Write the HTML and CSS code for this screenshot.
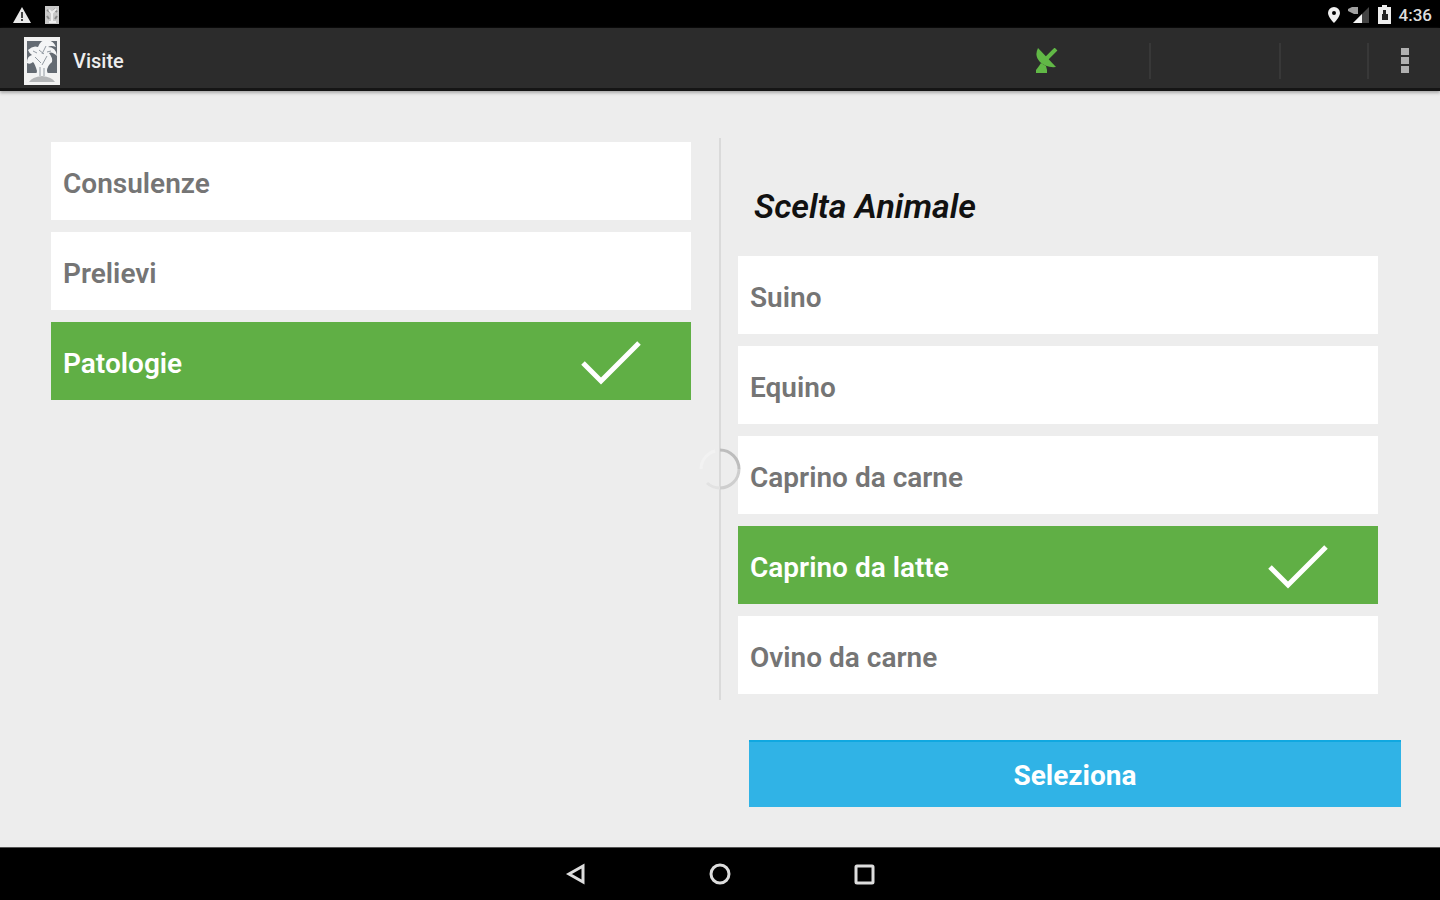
FILE: index.html
```html
<!DOCTYPE html>
<html lang="it">

<head>
    <title>Visite</title>
    <meta charset="utf-8">
    <meta name="viewport" content="width=device-width, initial-scale=1.0">
    <link rel="stylesheet" href="styles.css">
</head>

<body>
    <div class="status-bar">
        <svg width="20" height="18" viewBox="0 0 20 18">
            <path d="M10 1L19 17H1Z" fill="#e8e8e8" />
            <path d="M10 6v6M10 13v2" stroke="#444" stroke-width="2" />
        </svg>
        <svg class="notify" width="14" height="18" viewBox="0 0 14 18">
            <rect width="14" height="18" fill="#c8c8c8" />
            <path d="M2 4l3 2M9 3l3 3M2 10l2 3M12 10l-2 3" stroke="#8a8a8a" stroke-width="2" />
            <path d="M4 4l3 3 4-4M7 7v8M4 16h7" stroke="#eee" stroke-width="2" fill="none" />
        </svg>
        <div class="status-right">
            <svg width="12" height="18" viewBox="0 0 12 18">
                <path fill-rule="evenodd" d="M6 1a6 6 0 0 0-6 6c0 4 6 10 6 10s6-6 6-10a6 6 0 0 0-6-6zM6 5a2 2 0 1 1 0 4a2 2 0 0 1 0-4z" fill="#f0f0f0" />
            </svg>
            <svg width="22" height="18" viewBox="0 0 22 18">
                <path d="M21 1V17H5Z" fill="#444" />
                <path d="M14 8V17H5Z" fill="#f4f4f4" />
                <path d="M0 3l4-2h6v7H6L0 5z" fill="#a0a0a0" />
            </svg>
            <svg width="13" height="20" viewBox="0 0 13 20">
                <path d="M4 0h5v2h4v17H0V2h4z" fill="#eee" />
                <path d="M5 5h3v4h2v6H4V9h1z" fill="#222" />
            </svg>
            <span class="clock">4:36</span>
        </div>
    </div>

    <header class="action-bar">
        <svg class="logo" width="36" height="48" viewBox="0 0 36 48">
            <rect width="36" height="48" fill="#f2f2f2" />
            <rect x="3" y="4" width="30" height="32" fill="#646b73" />
            <path d="M4 13q5-5 10-3q3-8 9-7q7 1 9 7q-5-2-8 0q8 0 9 9q-5-5-8-3q4 5 3 9q-5 4-5 9l3 9H11l2-9q-2-7-4-9q-3 3-6 1q0-7 5-8q-3-2-4-5z" fill="#f4f5f6" />
            <path d="M15 13l5 4M22 9l-4 8M11 20l6 6M23 19l-5 9M27 14l-4 1M9 14l4 2M16 30v9M20 31v8" stroke="#929aa2" stroke-width="1" fill="none" />
            <path d="M5 45q3-5 13-6q10 1 13 6z" fill="#b4b6b8" />
        </svg>
        <h1>Visite</h1>
        <div class="actions">
            <svg class="antenna" width="24" height="26" viewBox="0 0 24 26">
                <path d="M3 0Q-1 8 5 14Q11 20 21 19Z" fill="#61b846" />
                <path d="M10 12L21 1" stroke="#61b846" stroke-width="4" />
                <path d="M1 25v-3l3-4 2-3 5 3 1 4v3z" fill="#61b846" />
            </svg>
            <span class="action action-first"></span>
            <span class="action action-second"></span>
            <span class="action action-third"></span>
            <button class="menu" type="button" aria-label="Menu">
                <svg width="8" height="28" viewBox="0 0 8 28">
                    <path d="M0 1h8v7H0zM0 10h8v7H0zM0 19h8v7H0z" fill="#b0b0b0" />
                </svg>
            </button>
        </div>
    </header>

    <main>
        <div class="options">
            <label class="option">
                <input type="radio" name="visita">
                <span>Consulenze</span>
                <svg class="check" width="60" height="44" viewBox="0 0 60 44"><path d="M2 22L20 40L58 2" /></svg>
            </label>
            <label class="option">
                <input type="radio" name="visita">
                <span>Prelievi</span>
                <svg class="check" width="60" height="44" viewBox="0 0 60 44"><path d="M2 22L20 40L58 2" /></svg>
            </label>
            <label class="option">
                <input type="radio" name="visita" checked>
                <span>Patologie</span>
                <svg class="check" width="60" height="44" viewBox="0 0 60 44"><path d="M2 22L20 40L58 2" /></svg>
            </label>
        </div>

        <div class="divider">
            <svg class="spinner" width="42" height="42" viewBox="0 0 42 42">
                <path d="M21 2A19 19 0 0 1 40 21" stroke="#bdbdbd" />
                <path d="M40 21A19 19 0 0 1 21 40" stroke="#cecece" />
                <path d="M21 40A19 19 0 0 1 8 35" stroke="#e2e2e2" />
                <path d="M2 21A19 19 0 0 1 16 3" stroke="#f2f2f2" />
            </svg>
        </div>

        <div class="animals">
            <h2>Scelta Animale</h2>
            <div class="options">
                <label class="option">
                    <input type="radio" name="animale">
                    <span>Suino</span>
                    <svg class="check" width="60" height="44" viewBox="0 0 60 44"><path d="M2 22L20 40L58 2" /></svg>
                </label>
                <label class="option">
                    <input type="radio" name="animale">
                    <span>Equino</span>
                    <svg class="check" width="60" height="44" viewBox="0 0 60 44"><path d="M2 22L20 40L58 2" /></svg>
                </label>
                <label class="option">
                    <input type="radio" name="animale">
                    <span>Caprino da carne</span>
                    <svg class="check" width="60" height="44" viewBox="0 0 60 44"><path d="M2 22L20 40L58 2" /></svg>
                </label>
                <label class="option">
                    <input type="radio" name="animale" checked>
                    <span>Caprino da latte</span>
                    <svg class="check" width="60" height="44" viewBox="0 0 60 44"><path d="M2 22L20 40L58 2" /></svg>
                </label>
                <label class="option">
                    <input type="radio" name="animale">
                    <span>Ovino da carne</span>
                    <svg class="check" width="60" height="44" viewBox="0 0 60 44"><path d="M2 22L20 40L58 2" /></svg>
                </label>
            </div>
        </div>

        <button class="select" type="button">Seleziona</button>
    </main>

    <nav class="nav-bar">
        <button type="button" aria-label="Indietro">
            <svg width="24" height="24" viewBox="0 0 24 24"><path d="M19 4V20L5 12Z" /></svg>
        </button>
        <button type="button" aria-label="Home">
            <svg width="24" height="24" viewBox="0 0 24 24"><circle cx="12" cy="12" r="9" /></svg>
        </button>
        <button type="button" aria-label="Recenti">
            <svg width="24" height="24" viewBox="0 0 24 24"><rect x="4" y="4" width="17" height="17" rx="1" /></svg>
        </button>
    </nav>
</body>

</html>
```
FILE: styles.css
```css
* {
    box-sizing: border-box;
}

body {
    margin: 0;
    min-height: 100vh;
    display: flex;
    flex-direction: column;
    font-family: Roboto, sans-serif;
    background-color: #ededed;
}

button {
    font-family: inherit;
    border: none;
    padding: 0;
    background: none;
    cursor: pointer;
}

svg {
    display: block;
    flex: none;
}

/* top bars */
.status-bar {
    height: 28px;
    padding: 2px 8px 0 12px;
    display: flex;
    align-items: center;
    background-color: #000;
}

.notify {
    margin-left: 13px;
}

.status-right {
    margin-left: auto;
    display: flex;
    align-items: center;
    gap: 8px;
}

.clock {
    color: #ddd;
    font-size: 17px;
    font-weight: 500;
    line-height: 20px;
}

.action-bar {
    height: 63px;
    padding: 6px 31px 0 24px;
    display: flex;
    align-items: center;
    background-color: #2c2c2c;
    border-bottom: 3px solid #151515;
    box-shadow: 0 2px 3px #aaa;
}

.action-bar h1 {
    margin: 0 0 0 13px;
    color: #eee;
    font-size: 20px;
    font-weight: 500;
}

.actions {
    margin-left: auto;
    display: flex;
    align-items: center;
}

.action {
    height: 36px;
    border-right: 2px solid #383838;
}

.action-first {
    width: 92px;
}

.action-second {
    width: 130px;
}

.action-third {
    width: 88px;
}

.menu {
    margin-left: 32px;
}

/* content */
main {
    flex: 1;
    padding: 47px 0 40px;
    display: grid;
    grid-template-columns: 1fr 2px 1fr;
    align-content: start;
}

main > .options {
    padding: 4px 28px 0 51px;
}

.options {
    display: grid;
    align-content: start;
    gap: 12px;
}

.option {
    position: relative;
    height: 78px;
    padding: 4px 50px 0 12px;
    display: flex;
    align-items: center;
    justify-content: space-between;
    background-color: #fff;
    color: #757575;
    font-size: 28px;
    font-weight: 600;
    cursor: pointer;
}

.option input {
    position: absolute;
    inset: 0;
    width: 100%;
    height: 100%;
    margin: 0;
    opacity: 0;
    cursor: pointer;
}

.option:has(input:checked) {
    background-color: #60af45;
    color: #fff;
}

.check {
    display: none;
    fill: none;
    stroke: #fff;
    stroke-width: 5;
}

.option input:checked ~ .check {
    display: block;
}

.divider {
    position: relative;
    background-color: #dadada;
}

.spinner {
    position: absolute;
    z-index: 1;
    top: 310px;
    left: -20px;
    fill: none;
    stroke-width: 3;
}

.animals {
    padding: 48px 62px 6px 17px;
}

.animals h2 {
    margin: 0 0 30px 16px;
    color: #111;
    font-size: 34px;
    font-style: italic;
    font-weight: 600;
    line-height: 40px;
}

.select {
    grid-column: 3;
    height: 67px;
    margin: 40px 39px 0 28px;
    padding-top: 1px;
    background-color: #30b3e6;
    border-top: 2px solid #10a8e0;
    color: #fff;
    font-size: 28px;
    font-weight: 700;
}

/* bottom bar */
.nav-bar {
    height: 53px;
    display: flex;
    justify-content: center;
    align-items: center;
    gap: 120px;
    background-color: #000;
    border-top: 1px solid #555;
}

.nav-bar svg {
    fill: none;
    stroke: #ddd;
    stroke-width: 3;
}
```
